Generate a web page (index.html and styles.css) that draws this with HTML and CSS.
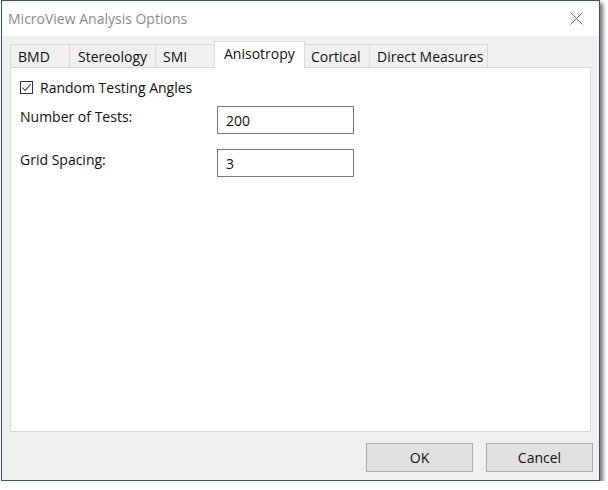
FILE: index.html
```html
<!DOCTYPE html>
<html>
<head>
<meta charset="utf-8">
<link rel="stylesheet" href="styles.css">
</head>
<body>
<div class="window">
  <div class="titlebar">
    <span class="title">MicroView Analysis Options</span>
    <svg class="close" width="13" height="13" viewBox="0 0 13 13"><path d="M0.5 0.5 L12.5 12.5 M12.5 0.5 L0.5 12.5" stroke="#6a6a6a" stroke-width="1" fill="none"/></svg>
  </div>
  <div class="body">
    <div class="tabs">
      <div class="tab t1">BMD</div>
      <div class="tab t2">Stereology</div>
      <div class="tab t3">SMI</div>
      <div class="tab active t4">Anisotropy</div>
      <div class="tab t5">Cortical</div>
      <div class="tab t6">Direct Measures</div>
    </div>
    <div class="panel">
      <label class="check">
        <span class="box"><svg width="11" height="11" viewBox="0 0 11 11"><path d="M1.5 5.5 L4.2 8.5 L9.8 2" stroke="#333" stroke-width="1.1" fill="none"/></svg></span>
        Random Testing Angles
      </label>
      <div class="row">
        <span class="lbl">Number of Tests:</span>
        <div class="input">200</div>
      </div>
      <div class="row">
        <span class="lbl">Grid Spacing:</span>
        <div class="input">3</div>
      </div>
    </div>
    <div class="buttons">
      <div class="btn">OK</div>
      <div class="btn">Cancel</div>
    </div>
  </div>
</div>
</body>
</html>
```
FILE: styles.css
```css
html, body { margin: 0; padding: 0; background: #ffffff; }
body { font-family: "Open Sans", "Noto Sans", sans-serif; font-size: 14px; color: #111; }
.window {
  margin-left: 1px;
  width: 597px;
  height: 479px;
  border: 1px solid #3b5170;
  background: #f0f0f0;
  box-shadow: 3px 3px 4px rgba(0,0,0,0.55);
  display: flex;
  flex-direction: column;
}
.titlebar {
  height: 35px;
  background: #fff;
  display: flex;
  align-items: center;
  justify-content: space-between;
  padding: 0 16px 0 6px;
}
.title { font-size: 14px; color: #8a8a8a; }
.close { display: block; }
.body { flex: 1; display: flex; flex-direction: column; padding: 4px 8px 0 8px; }
.tabs { display: flex; align-items: flex-end; height: 27px; }
.tab {
  height: 23px;
  box-sizing: border-box;
  border: 1px solid #d9d9d9;
  border-bottom: none;
  background: #f0f0f0;
  display: flex; align-items: center; justify-content: flex-start;
  padding-left: 7px;
  margin-right: -1px;
  font-size: 14px;
  white-space: nowrap;
}
.t1 { width: 60px; }
.t2 { width: 87px; padding-left: 8px; }
.t3 { width: 60px; }
.t4 { width: 91px; height: 27px; background: #fff; padding-left: 9px; padding-bottom: 3px; position: relative; z-index: 1; margin-bottom: -1px; }
.t5 { width: 66px; padding-left: 6px; }
.t6 { width: 119px; }
.panel {
  height: 365px;
  background: #fff;
  border: 1px solid #d9d9d9;
  padding: 9px 10px 9px 9px;
  box-sizing: border-box;
}
.check { display: flex; align-items: center; gap: 7px; height: 20px; font-size: 14px; }
.box { width: 11px; height: 11px; border: 1px solid #333; display: flex; align-items: center; justify-content: center; }
.row { display: flex; align-items: flex-start; margin-top: 9px; }
.row + .row { margin-top: 15px; }
.lbl { width: 197px; padding-top: 1px; }
.input {
  width: 137px; height: 28px; box-sizing: border-box;
  border: 1px solid #7a7a7a;
  padding: 4px 8px;
}
.buttons { display: flex; justify-content: flex-end; gap: 13px; padding-top: 11px; margin-right: -2px; }
.btn {
  width: 107px; height: 29px; box-sizing: border-box;
  border: 1px solid #adadad; background: #e1e1e1;
  display: flex; align-items: center; justify-content: center; font-size: 14px;
}
```
